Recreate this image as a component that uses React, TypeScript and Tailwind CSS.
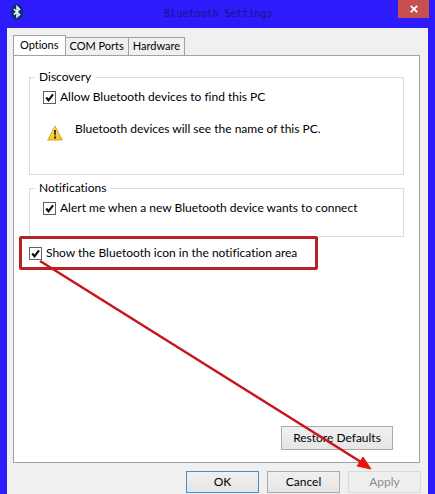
import { useState } from 'react';
import type { ReactNode } from 'react';

const TABS = ['Options', 'COM Ports', 'Hardware'];

function BluetoothIcon() {
  return (
    <svg className="w-4 h-5" viewBox="0 0 16 20" fill="none">
      <ellipse cx="8" cy="10" rx="6" ry="8" fill="#0d2c6b" />
      <path d="M4.8 7 L10.6 12.4 L8 14.8 V4.6 L10.6 7.2 L4.8 12.6" stroke="#dff8ff" strokeWidth="1.5" />
    </svg>
  );
}

function WarningIcon() {
  return (
    <svg className="w-4 h-4 shrink-0" viewBox="0 0 16 16">
      <defs>
        <linearGradient id="warning" x1="0" y1="0" x2="0" y2="1">
          <stop offset="0" stopColor="#fbe67c" />
          <stop offset="1" stopColor="#f0c61e" />
        </linearGradient>
      </defs>
      <path d="M8 1 L15.3 15 H0.7 Z" fill="url(#warning)" stroke="#d0a92c" strokeWidth="1" strokeLinejoin="round" />
      <path d="M7 5 H9 L8.7 10.5 H7.3 Z" fill="#2b2510" />
      <rect x="7" y="11.5" width="2" height="2" fill="#2b2510" />
    </svg>
  );
}

function Checkbox({ id, children }: { id: string; children: ReactNode }) {
  const [checked, setChecked] = useState(true);

  return (
    <div className="flex items-center gap-1">
      <span className="relative flex w-[13px] h-[13px] shrink-0">
        <input
          id={id}
          type="checkbox"
          checked={checked}
          onChange={() => setChecked(!checked)}
          className="appearance-none w-full h-full border border-[#606060] bg-white"
        />
        {checked && (
          <svg className="absolute inset-0 pointer-events-none" viewBox="0 0 13 13" fill="none">
            <path d="M3.2 6.5 L5.5 9.3 L10 3.4" stroke="#111" strokeWidth="2.2" />
          </svg>
        )}
      </span>
      <label htmlFor={id}>{children}</label>
    </div>
  );
}

function Group({ title, children }: { title: string; children: ReactNode }) {
  return (
    <fieldset className="border border-[#dcdcdc] px-[13px]">
      <legend className="-ml-2 px-1 leading-4">{title}</legend>
      {children}
    </fieldset>
  );
}

export default function App() {
  const [tab, setTab] = useState('Options');

  return (
    <div className="relative min-h-screen flex flex-col bg-[#2d1bfb] px-[7px] font-['Lato','Open_Sans',sans-serif] text-xs text-black [font-variant-ligatures:none]">
      <header className="h-7 flex items-start justify-between -mr-px">
        <div className="w-8 pl-[2px] pt-[2px]">
          <BluetoothIcon />
        </div>
        <h1 className="pt-[6px] font-['DejaVu_Sans_Mono',monospace] text-[10px] leading-4 text-[#1c1580]">Bluetooth Settings</h1>
        <button aria-label="Close" className="w-[31px] h-[18px] flex items-center justify-center bg-[#c75050]">
          <svg className="w-2 h-2" viewBox="0 0 8 8" fill="none">
            <path d="M0.8 0.8 L7.2 7.2 M7.2 0.8 L0.8 7.2" stroke="#fff" strokeWidth="1.8" />
          </svg>
        </button>
      </header>

      <main className="flex-1 flex flex-col bg-[#f0f0f0] pl-[6px] pr-[7px] pt-[7px]">
        <div role="tablist" className="flex items-end -mb-px text-[11px]">
          {TABS.map((name) => (
            <button
              key={name}
              role="tab"
              aria-selected={tab === name}
              onClick={() => setTab(name)}
              className={
                tab === name
                  ? 'h-[21px] px-[6px] pb-px border border-b-0 border-[#a0a0a5] bg-white'
                  : 'h-[19px] px-1 border border-l-0 border-[#a0a0a5] bg-[#f0f0f0]'
              }
            >
              {name}
            </button>
          ))}
        </div>

        <section className="flex-1 flex flex-col border border-[#a0a0a5] bg-white px-[15px] pt-[13px] pb-3 mr-px">
          <Group title="Discovery">
            <div className="h-[89px] pt-1">
              <Checkbox id="discovery">Allow Bluetooth devices to find this PC</Checkbox>
              <div className="flex items-start gap-3 pl-1 pt-4">
                <span className="pt-1">
                  <WarningIcon />
                </span>
                <p>Bluetooth devices will see the name of this PC.</p>
              </div>
            </div>
          </Group>
          <div className="pt-[5px]">
            <Group title="Notifications">
              <div className="h-10 pt-1">
                <Checkbox id="alert">Alert me when a new Bluetooth device wants to connect</Checkbox>
              </div>
            </Group>
          </div>
          <div className="self-start -ml-[10px] -mt-px h-[34px] w-[299px] max-w-full px-[7px] flex items-center border-3 border-[#b92025] rounded-xs">
            <Checkbox id="show-icon">Show the Bluetooth icon in the notification area</Checkbox>
          </div>
          <button className="mt-auto self-end mr-[11px] w-28 h-6 border border-[#a9a9a9] bg-linear-to-b from-[#f0f0f0] to-[#e5e5e5]">
            Restore Defaults
          </button>
        </section>

        <footer className="flex justify-end gap-2 pt-2 pb-px">
          <button className="w-[73px] h-[22px] border border-[#4a90c8] bg-linear-to-b from-[#f0f0f0] to-[#e5e5e5]">OK</button>
          <button className="w-[73px] h-[22px] border border-[#acacac] bg-linear-to-b from-[#f0f0f0] to-[#e5e5e5]">Cancel</button>
          <button disabled className="w-[73px] h-[22px] border border-[#d9d9d9] bg-[#efefef] text-[#8b8b8b]">Apply</button>
        </footer>
      </main>

      <svg className="absolute inset-0 w-full h-full pointer-events-none" viewBox="0 0 435 494" preserveAspectRatio="none" fill="none">
        <path d="M40 261 L361 462" stroke="#c8161b" strokeWidth="2.6" />
        <path d="M371 469 L357 466 L360 462 L363 457 Z" fill="#e8130f" stroke="#e8130f" />
      </svg>
    </div>
  );
}
